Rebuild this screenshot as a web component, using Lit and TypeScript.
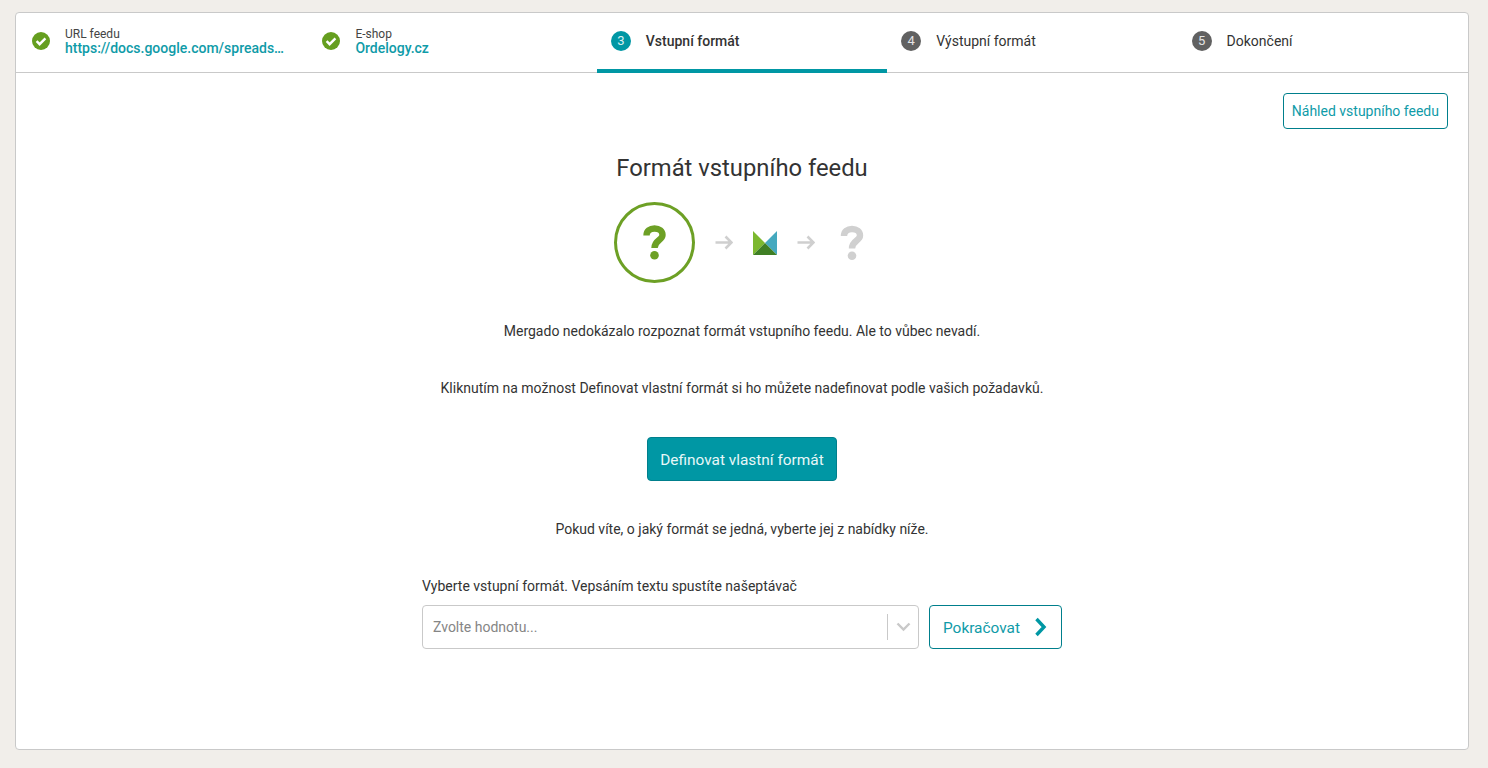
import { LitElement, html, css, svg } from 'lit';
import { customElement } from 'lit/decorators.js';

const bigQuestion = (color: string) => svg`
  <path d="M-8 -7C-8 -11.5 -4.5 -14 0 -14C4.8 -14 8 -11.3 8 -7.5C8 -2 0 -2.5 0 5.5" fill="none" stroke="${color}" stroke-width="6.4"></path>
  <circle cx="0" cy="12.7" r="4.3" fill="${color}"></circle>
`;

const arrow = html`<svg class="arrow" width="18" height="15" viewBox="0 0 18 15">
  <path d="M0.5 7.5H16.5M10.5 1.5L16.5 7.5L10.5 13.5" fill="none" stroke="#cfcfcf" stroke-width="2.6"></path>
</svg>`;

const check = html`<svg class="check" width="18" height="18" viewBox="0 0 18 18">
  <circle cx="9" cy="9" r="9" fill="#659e1f"></circle>
  <path d="M4.6 9.2L7.6 12.2L13.4 6.4" fill="none" stroke="#fff" stroke-width="2.4"></path>
</svg>`;

@customElement('app-root')
export class AppRoot extends LitElement {
  static styles = css`
    :host {
      display: block;
      height: 768px;
      box-sizing: border-box;
      padding: 12px 19px 18px 15px;
      background: #f1eeea;
      font-family: Roboto, 'Liberation Sans', sans-serif;
      font-size: 14px;
      color: #333;
    }
    .card {
      height: 100%;
      box-sizing: border-box;
      display: flex;
      flex-direction: column;
      background: #fff;
      border: 1px solid #c9c9c9;
      border-radius: 4px;
    }
    .steps {
      display: grid;
      grid-template-columns: repeat(5, 1fr);
      height: 59px;
      border-bottom: 1px solid #c9c9c9;
    }
    .step {
      display: flex;
      align-items: center;
      box-sizing: border-box;
      height: 60px;
      padding: 0 0 4px 14px;
      gap: 15px;
      min-width: 0;
    }
    .step.active {
      padding-bottom: 0;
      border-bottom: 4px solid #0097a4;
    }
    .step .check {
      flex: none;
      margin: 0 0.5px 0 1.5px;
    }
    .num {
      flex: none;
      width: 20px;
      height: 20px;
      border-radius: 50%;
      background: #616161;
      color: #e4e4e4;
      font-size: 13px;
      line-height: 20px;
      text-align: center;
    }
    .active .num {
      background: #0097a4;
      color: #d8f0f2;
    }
    .step.active .label {
      font-weight: 500;
    }
    .done-text {
      min-width: 0;
      display: flex;
      flex-direction: column;
    }
    .caption {
      font-size: 12px;
      line-height: 14px;
      color: #444;
    }
    .value {
      font-size: 14px;
      line-height: 15px;
      font-weight: 500;
      color: #0f9ba8;
      white-space: nowrap;
    }
    .body {
      flex: 1;
      display: flex;
      flex-direction: column;
      align-items: center;
      position: relative;
    }
    .preview {
      position: absolute;
      top: 20px;
      right: 20px;
    }
    .btn-outline {
      box-sizing: border-box;
      height: 36px;
      padding: 0 8px;
      background: #fff;
      border: 1px solid #007f8c;
      border-radius: 4px;
      font: inherit;
      color: #0f9ba8;
    }
    h1 {
      margin: 81px 0 0;
      font-size: 23.8px;
      line-height: 28px;
      font-weight: 400;
      color: #333;
    }
    .flow {
      display: flex;
      align-items: center;
      margin-top: 20px;
      height: 82px;
    }
    .flow .ring {
      align-self: flex-start;
      margin-right: 20px;
    }
    .flow .arrow {
      margin-top: -1px;
    }
    .flow .logo {
      margin: 0 20px;
    }
    .flow .unknown {
      margin-left: 19px;
    }
    p {
      margin: 0;
      line-height: 20px;
    }
    .p1 { margin-top: 37px; }
    .p2 { margin-top: 37px; }
    .primary {
      margin-top: 39px;
      height: 44px;
      width: 190px;
      padding: 1px 0 0;
      background: #0097a4;
      border: 1px solid #007f8c;
      border-radius: 4px;
      color: #e8f7f8;
      font: inherit;
      font-size: 15.4px;
    }
    .primary + p { margin-top: 38px; }
    .select-block {
      width: 640px;
      margin-top: 37px;
    }
    .select-label {
      line-height: 20px;
      margin-bottom: 9px;
    }
    .select-row {
      display: flex;
      gap: 10px;
    }
    .select {
      flex: 1;
      height: 44px;
      box-sizing: border-box;
      display: flex;
      align-items: center;
      border: 1px solid #c9c9c9;
      border-radius: 4px;
      padding-left: 10px;
      color: #858585;
    }
    .placeholder { flex: 1; }
    .sep {
      width: 1px;
      height: 26px;
      background: #c9c9c9;
    }
    .chev {
      margin: 0 7px 0 8px;
    }
    .next {
      width: 133px;
      height: 44px;
      display: flex;
      align-items: center;
      padding: 0 13px;
      font-size: 15.4px;
    }
    .next span { flex: 1; text-align: left; padding-top: 2px; }
  `;

  render() {
    return html`
      <div class="card">
        <div class="steps">
          <div class="step">
            ${check}
            <div class="done-text">
              <span class="caption">URL feedu</span>
              <span class="value">https://docs.google.com/spreads…</span>
            </div>
          </div>
          <div class="step">
            ${check}
            <div class="done-text">
              <span class="caption">E-shop</span>
              <span class="value">Ordelogy.cz</span>
            </div>
          </div>
          <div class="step active"><span class="num">3</span><span class="label">Vstupní formát</span></div>
          <div class="step"><span class="num">4</span><span class="label">Výstupní formát</span></div>
          <div class="step"><span class="num">5</span><span class="label">Dokončení</span></div>
        </div>
        <div class="body">
          <button class="btn-outline preview">Náhled vstupního feedu</button>
          <h1>Formát vstupního feedu</h1>
          <div class="flow">
            <svg class="ring" width="81" height="81" viewBox="-40.5 -40.5 81 81">
              <circle r="39" fill="none" stroke="#6da025" stroke-width="3"></circle>
              ${bigQuestion('#6da025')}
            </svg>
            ${arrow}
            <svg class="logo" width="24" height="24" viewBox="0 0 24 24">
              <path d="M0 0L12 12L0 24Z" fill="#7cb82f"></path>
              <path d="M24 0L12 12L24 24Z" fill="#45a9bf"></path>
              <path d="M0 24L12 12L24 24Z" fill="#3f7f24"></path>
            </svg>
            ${arrow}
            <svg class="unknown" width="36" height="42" viewBox="-18 -21 36 42">
              ${bigQuestion('#d0d0d0')}
            </svg>
          </div>
          <p class="p1">Mergado nedokázalo rozpoznat formát vstupního feedu. Ale to vůbec nevadí.</p>
          <p class="p2">Kliknutím na možnost Definovat vlastní formát si ho můžete nadefinovat podle vašich požadavků.</p>
          <button class="primary">Definovat vlastní formát</button>
          <p>Pokud víte, o jaký formát se jedná, vyberte jej z nabídky níže.</p>
          <div class="select-block">
            <div class="select-label">Vyberte vstupní formát. Vepsáním textu spustíte našeptávač</div>
            <div class="select-row">
              <div class="select">
                <span class="placeholder">Zvolte hodnotu...</span>
                <span class="sep"></span>
                <svg class="chev" width="15" height="10" viewBox="0 0 15 10">
                  <path d="M1.5 1.5L7.5 7.5L13.5 1.5" fill="none" stroke="#c9c9c9" stroke-width="2.4"></path>
                </svg>
              </div>
              <button class="btn-outline next">
                <span>Pokračovat</span>
                <svg width="14" height="20" viewBox="0 0 14 20">
                  <path d="M2.5 2L10 10L2.5 18" fill="none" stroke="#0097a4" stroke-width="3.4"></path>
                </svg>
              </button>
            </div>
          </div>
        </div>
      </div>
    `;
  }
}
